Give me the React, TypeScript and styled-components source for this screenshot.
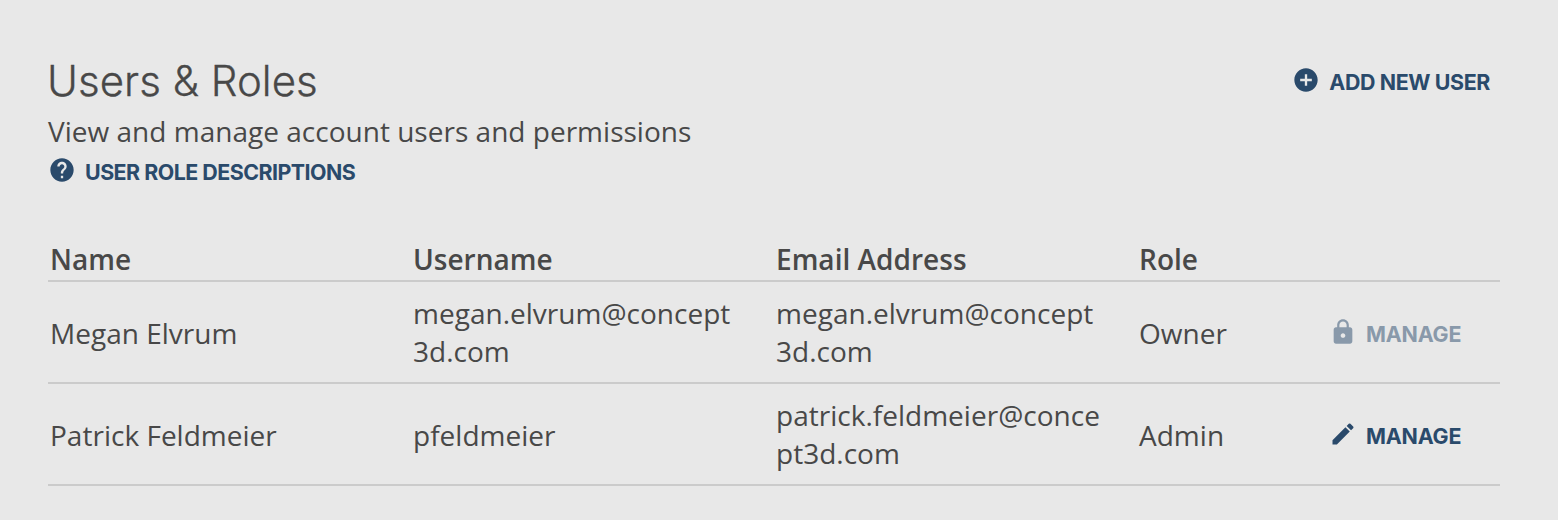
import React from "react";
import styled, { createGlobalStyle } from "styled-components";
import { MdAddCircle, MdHelp, MdLock, MdEdit } from "react-icons/md";

const GlobalStyle = createGlobalStyle`
  * { box-sizing: border-box; }
  body {
    margin: 0;
    background: #e8e8e8;
    color: #484848;
    font-family: "Open Sans", sans-serif;
    font-size: 28px;
    letter-spacing: 0.015px;
  }
`;

const Page = styled.main`
  width: 1558px;
  height: 520px;
  padding: 56px 58px 0 48px;
`;

const Header = styled.header`
  display: flex;
  justify-content: space-between;
  align-items: flex-start;
  height: 186px;
`;

const Title = styled.h1`
  margin: 0 0 0 -1px;
  height: 55px;
  line-height: 50px;
  font-family: Inter, sans-serif;
  font-size: 42px;
  font-weight: 300;
  letter-spacing: 0.03px;
  -webkit-text-stroke: 0.3px currentColor;
  white-space: nowrap;
`;

const Subtitle = styled.p`
  margin: 0;
  line-height: 40px;
  white-space: nowrap;
`;

const Action = styled.button<{ $top?: number; $end?: number; $start?: number; $track?: number }>`
  display: flex;
  align-items: center;
  gap: 9px;
  height: 28px;
  margin: ${(p) => p.$top ?? 0}px ${(p) => p.$end ?? 0}px 0 ${(p) => p.$start ?? 0}px;
  padding: 0;
  border: 0;
  background: none;
  color: #2a4a6b;
  font-family: Inter, sans-serif;
  font-size: 21.4px;
  font-weight: 700;
  letter-spacing: ${(p) => p.$track ?? -0.6}px;
  white-space: nowrap;

  &:disabled { color: #8999aa; }
  svg { flex: none; margin-top: -4px; }
`;

const Table = styled.div`
  width: 1452px;
`;

const Row = styled.div`
  display: grid;
  grid-template-columns: 363px 363px 363px 190px 1fr;
  align-items: center;
  height: 102px;
  border-bottom: 2px solid #cbcbcb;
`;

const HeadRow = styled(Row)`
  align-items: start;
  height: 40px;
  font-weight: 600;
`;

const HeadCell = styled.div`
  padding-left: 2px;
  line-height: 35px;
`;

const Cell = styled.div<{ $wrapped?: boolean }>`
  padding: ${(p) => (p.$wrapped ? 0 : 2)}px 36px 0 2px;
  line-height: 38px;
  overflow-wrap: anywhere;
`;

const users = [
  { name: "Megan Elvrum", username: "megan.elvrum@concept3d.com", email: "megan.elvrum@concept3d.com", role: "Owner", locked: true },
  { name: "Patrick Feldmeier", username: "pfeldmeier", email: "patrick.feldmeier@concept3d.com", role: "Admin", locked: false },
];

export default function App() {
  return (
    <>
      <GlobalStyle />
      <Page>
        <Header>
          <div>
            <Title>Users &amp; Roles</Title>
            <Subtitle>View and manage account users and permissions</Subtitle>
            <Action $top={7} $track={-0.52}><MdHelp size={28} />USER ROLE DESCRIPTIONS</Action>
          </div>
          <Action $top={12} $end={10} $track={-0.38}><MdAddCircle size={28} />ADD NEW USER</Action>
        </Header>
        <Table>
          <HeadRow>
            <HeadCell>Name</HeadCell>
            <HeadCell>Username</HeadCell>
            <HeadCell>Email Address</HeadCell>
            <HeadCell>Role</HeadCell>
          </HeadRow>
          {users.map((user) => (
            <Row key={user.name}>
              <Cell>{user.name}</Cell>
              <Cell $wrapped={user.username.includes("@")}>{user.username}</Cell>
              <Cell $wrapped>{user.email}</Cell>
              <Cell>{user.role}</Cell>
              <Action disabled={user.locked} $top={4} $start={2} $track={-0.17}>
                {user.locked ? <MdLock size={28} /> : <MdEdit size={28} />}MANAGE
              </Action>
            </Row>
          ))}
        </Table>
      </Page>
    </>
  );
}
